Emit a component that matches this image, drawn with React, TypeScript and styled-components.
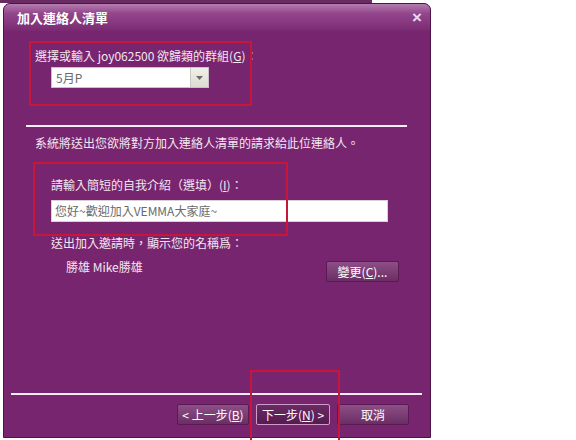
import React from "react";
import styled, { createGlobalStyle } from "styled-components";

const GlobalStyle = createGlobalStyle`
  html, body {
    margin: 0;
    padding: 0;
    background: #ffffff;
  }
  body {
    font-family: "Noto Sans CJK TC", "Liberation Sans", sans-serif;
    font-size: 12px;
  }
`;

const Page = styled.div`
  position: relative;
  width: 576px;
  height: 440px;
  overflow: hidden;
  padding: 3px 0 0 3px;
  box-sizing: border-box;
  background: linear-gradient(#6a2a62, #6a2a62) no-repeat 0 0 / 372px 3px, #ffffff;
`;

const Dialog = styled.div`
  width: 428px;
  height: 435px;
  box-sizing: border-box;
  border: 1px solid #4d1447;
  border-radius: 7px 7px 0 0;
  background: #77256f;
  display: flex;
  flex-direction: column;
  color: #f3e6f0;
`;

const TitleBar = styled.div`
  height: 27px;
  flex: none;
  display: flex;
  align-items: center;
  justify-content: space-between;
  padding: 0 8px 0 13px;
  border-radius: 6px 6px 0 0;
  background: linear-gradient(#b47cae 0%, #94468c 35%, #7a2a72 100%);
`;

const Title = styled.span`
  font-size: 13px;
  font-weight: bold;
  color: #ffffff;
`;

const Close = styled.span`
  font-family: "Liberation Sans", sans-serif;
  font-size: 17px;
  font-weight: bold;
  color: #f0d8ec;
  line-height: 1;
`;

const Body = styled.div`
  flex: 1;
  display: flex;
  flex-direction: column;
`;

const Text = styled.div<{ $left: number; $top?: number }>`
  margin-left: ${(p) => p.$left}px;
  margin-top: ${(p) => p.$top ?? 0}px;
  height: 16px;
  line-height: 16px;
  white-space: nowrap;
`;

const Combo = styled.div`
  margin: 3px 0 0 47px;
  width: 158px;
  height: 21px;
  box-sizing: border-box;
  border: 1px solid #c9c0c8;
  background: #ffffff;
  display: flex;
`;

const ComboText = styled.span`
  flex: 1;
  padding-left: 4px;
  line-height: 19px;
  color: #6a6a6a;
`;

const ComboButton = styled.span`
  width: 17px;
  background: linear-gradient(#f0f0ea, #dcdcd2);
  border-left: 1px solid #c8c8c0;
  display: flex;
  align-items: center;
  justify-content: center;
`;

const Separator = styled.div<{ $left: number; $width: number; $top: number }>`
  margin-left: ${(p) => p.$left}px;
  margin-top: ${(p) => p.$top}px;
  width: ${(p) => p.$width}px;
  height: 2px;
  background: #f6eef4;
`;

const Input = styled.div`
  margin: 7px 0 0 47px;
  width: 337px;
  height: 22px;
  box-sizing: border-box;
  border: 1px solid #d8d0d6;
  background: #ffffff;
  padding-left: 3px;
  line-height: 20px;
  color: #6a6a6a;
  white-space: nowrap;
`;

const NameRow = styled.div`
  margin: 8px 0 0 62px;
  width: 333px;
  display: flex;
  justify-content: space-between;
  align-items: flex-start;
`;

const Spacer = styled.div`
  flex: 1;
`;

const Footer = styled.div`
  flex: none;
  padding-bottom: 12px;
`;

const ButtonRow = styled.div`
  margin: 9px 0 0 173px;
  display: flex;
  gap: 7px;
`;

const Button = styled.div<{ $default?: boolean; $width?: number; $top?: number }>`
  width: ${(p) => p.$width ?? 73}px;
  height: 21px;
  margin-top: ${(p) => p.$top ?? 0}px;
  box-sizing: border-box;
  border: 1px solid ${(p) => (p.$default ? "#cf9ec8" : "#5c1a55")};
  border-radius: 2px;
  background: ${(p) =>
    p.$default
      ? "linear-gradient(#6a2a63, #561b50)"
      : "linear-gradient(#8e4e87, #6a2e64)"};
  color: #ffffff;
  display: flex;
  align-items: center;
  justify-content: center;
  line-height: 19px;
  white-space: nowrap;
`;

const Mark = styled.span`
  text-decoration: underline;
`;

const Annotation = styled.div<{ $x: number; $y: number; $w: number; $h: number; $open?: boolean }>`
  position: absolute;
  left: ${(p) => p.$x}px;
  top: ${(p) => p.$y}px;
  width: ${(p) => p.$w}px;
  height: ${(p) => p.$h}px;
  box-sizing: border-box;
  border: 2px solid #c8163a;
  ${(p) => (p.$open ? "border-bottom: none;" : "")}
  pointer-events: none;
`;

export default function App() {
  return (
    <>
      <GlobalStyle />
      <Page>
        <Dialog>
          <TitleBar>
            <Title>加入連絡人清單</Title>
            <Close>×</Close>
          </TitleBar>
          <Body>
            <Text $left={31} $top={17}>
              選擇或輸入 joy062500 欲歸類的群組(<Mark>G</Mark>)：
            </Text>
            <Combo>
              <ComboText>5月P</ComboText>
              <ComboButton>
                <svg width="7" height="4" viewBox="0 0 7 4">
                  <path d="M0 0h7L3.5 4z" fill="#6a6a6a" />
                </svg>
              </ComboButton>
            </Combo>
            <Separator $left={22} $width={381} $top={37} />
            <Text $left={31} $top={8}>
              系統將送出您欲將對方加入連絡人清單的請求給此位連絡人。
            </Text>
            <Text $left={47} $top={26}>
              請輸入簡短的自我介紹（選填）(<Mark>I</Mark>)：
            </Text>
            <Input>您好~歡迎加入VEMMA大家庭~</Input>
            <Text $left={47} $top={13}>
              送出加入邀請時，顯示您的名稱爲：
            </Text>
            <NameRow>
              <Text $left={0}>勝雄 Mike勝雄</Text>
              <Button $width={73} $top={2}>
                變更(<Mark>C</Mark>)...
              </Button>
            </NameRow>
            <Spacer />
            <Footer>
              <Separator $left={7} $width={411} $top={0} />
              <ButtonRow>
                <Button $width={72}>
                  &lt; 上一步(<Mark>B</Mark>)
                </Button>
                <Button $default $width={74}>
                  下一步(<Mark>N</Mark>) &gt;
                </Button>
                <Button $width={72}>取消</Button>
              </ButtonRow>
            </Footer>
          </Body>
        </Dialog>
        <Annotation $x={29} $y={41} $w={223} $h={65} />
        <Annotation $x={33} $y={162} $w={255} $h={74} />
        <Annotation $x={250} $y={370} $w={90} $h={80} $open />
      </Page>
    </>
  );
}
